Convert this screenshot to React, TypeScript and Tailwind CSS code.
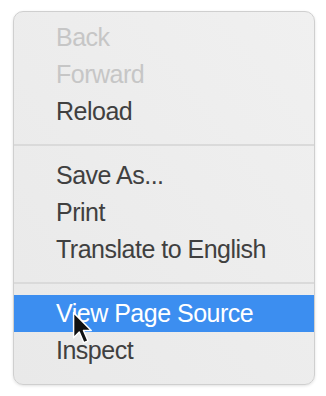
import React from "react";

type Item = { label: string; disabled?: boolean; active?: boolean };

const groups: Item[][] = [
  [{ label: "Back", disabled: true }, { label: "Forward", disabled: true }, { label: "Reload" }],
  [{ label: "Save As..." }, { label: "Print" }, { label: "Translate to English" }],
  [{ label: "View Page Source", active: true }, { label: "Inspect" }],
];

function Cursor() {
  return (
    <svg
      className="absolute left-[71px] top-[311px] w-[23px] h-[34px]"
      viewBox="0 0 14 21"
      fill="none"
    >
      <path
        d="M1.5 1 L1.5 16.5 L5 13 L7.8 19.6 L10.4 18.5 L7.6 12 L12.4 12 Z"
        fill="#111"
        stroke="#fff"
        strokeWidth="0.9"
        strokeLinejoin="round"
      />
    </svg>
  );
}

export default function App() {
  return (
    <div className="relative w-[326px] h-[396px] bg-white overflow-hidden">
      <div className="ml-[13px] mt-[11px] w-[302px] rounded-[10px] border border-[#cfcfcf] bg-gradient-to-bl from-[#f0f0f0] to-[#e9e9e9] pt-[7px] pb-[15px] shadow-[0_1px_3px_rgba(0,0,0,0.12)] font-['Liberation_Sans',Arial,sans-serif]">
        {groups.map((group, gi) => (
          <div key={gi}>
            {gi > 0 && (
              <div className="pt-[14px] pb-[11px]">
                <div className="h-[2px] bg-[#dadada]" />
              </div>
            )}
            {group.map((item) => (
              <div
                key={item.label}
                className={
                  "h-[37px] flex items-center pl-[42px] text-[25px] tracking-[-0.5px] " +
                  (item.active
                    ? "bg-[#3c8ef0] text-white"
                    : item.disabled
                    ? "text-[#c6c6c6]"
                    : "text-[#404040]")
                }
              >
                {item.label}
              </div>
            ))}
          </div>
        ))}
      </div>
      <Cursor />
    </div>
  );
}
